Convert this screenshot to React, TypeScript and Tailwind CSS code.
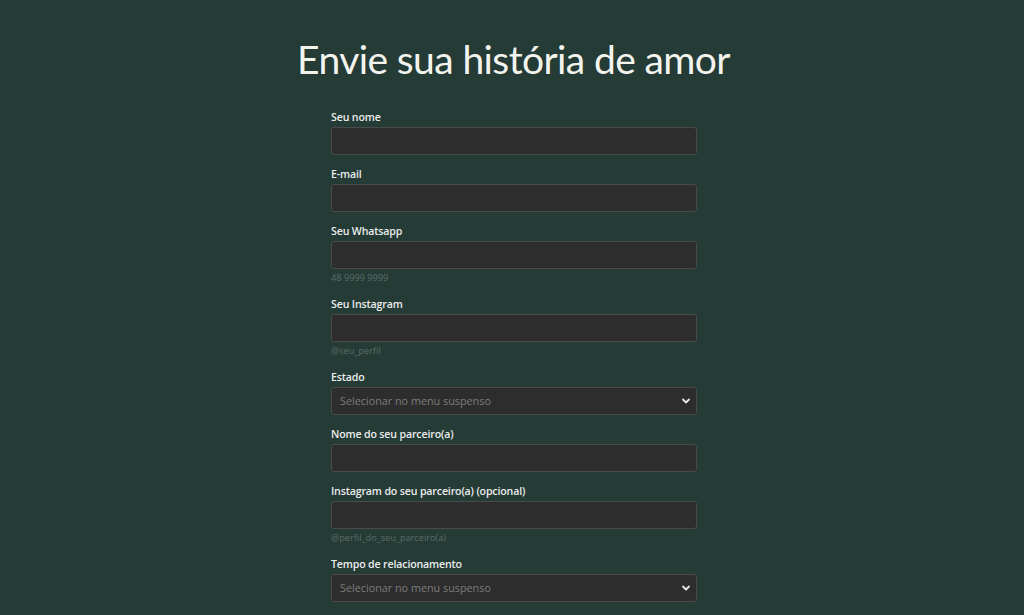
import React from "react";

function Chevron() {
  return (
    <svg width="10" height="10" viewBox="0 0 10 10" className="text-[#e8e8e8]">
      <path d="M2 3.5 L5 6.5 L8 3.5" fill="none" stroke="currentColor" strokeWidth="1.8" strokeLinecap="round" strokeLinejoin="round" />
    </svg>
  );
}

function Field({ label, helper, select }: { label: string; helper?: string; select?: boolean }) {
  return (
    <div className="flex flex-col">
      <label className="text-[10.6px] leading-[14px] font-semibold tracking-[-0.15px] text-[#ececec]">{label}</label>
      {select ? (
        <div className="mt-[3px] h-[28px] rounded-[3px] border border-[#4a4a4a] bg-[#2e2d2d] flex items-center justify-between pl-[8px] pr-[5px]">
          <span className="text-[10.8px] text-[#7c7c7c]">Selecionar no menu suspenso</span>
          <Chevron />
        </div>
      ) : (
        <div className="mt-[3px] h-[28px] rounded-[3px] border border-[#4a4a4a] bg-[#2e2d2d]" />
      )}
      {helper && (
        <div className="mt-[3px] mb-[1px] text-[9.2px] leading-[12px] text-[#5d6d68]">{helper}</div>
      )}
    </div>
  );
}

export default function App() {
  return (
    <div className="w-[1024px] h-[615px] overflow-hidden bg-[#243b36] flex flex-col items-center" style={{ fontFamily: '"Open Sans", sans-serif' }}>
      <h1 className="mt-[34px] ml-[3px] text-[39px] leading-[50px] text-[#f4f4ef] font-normal tracking-[-0.6px]" style={{ fontFamily: 'Lato, sans-serif' }}>
        Envie sua história de amor
      </h1>
      <div className="mt-[26px] ml-[4px] w-[366px] flex flex-col gap-[12px]">
        <Field label="Seu nome" />
        <Field label="E-mail" />
        <Field label="Seu Whatsapp" helper="48 9999 9999" />
        <Field label="Seu Instagram" helper="@seu_perfil" />
        <Field label="Estado" select />
        <Field label="Nome do seu parceiro(a)" />
        <Field label="Instagram do seu parceiro(a) (opcional)" helper="@perfil_do_seu_parceiro(a)" />
        <Field label="Tempo de relacionamento" select />
      </div>
    </div>
  );
}
